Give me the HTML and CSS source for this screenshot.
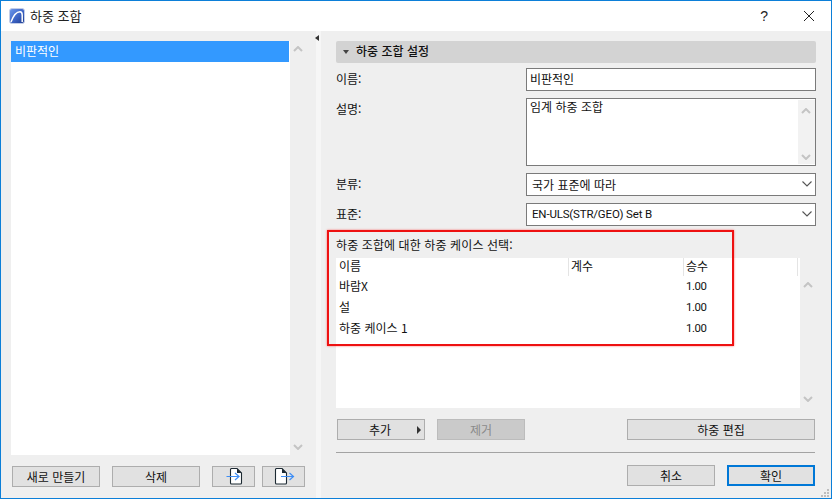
FILE: index.html
```html
<!DOCTYPE html>
<html lang="ko">
<head>
<meta charset="utf-8">
<title>하중 조합</title>
<link rel="stylesheet" href="styles.css">
</head>
<body>
<div class="window">
  <header class="titlebar">
    <svg class="app-icon" width="16" height="16" viewBox="0 0 16 16">
      <defs><linearGradient id="g" x1="0" y1="0" x2="1" y2="1"><stop offset="0" stop-color="#6f9bee"/><stop offset=".55" stop-color="#3c63c4"/><stop offset="1" stop-color="#1c3a8e"/></linearGradient></defs>
      <rect x="0.5" y="0.5" width="15" height="15" rx="2.500" fill="url(#g)" stroke="#c3cee8"/>
      <path d="M2 14C4 8.500 7.500 3.700 11 3.700c1.800 0 2.200 1.500 2.200 3.300V14" fill="none" stroke="#fff" stroke-width="1.500"/>
    </svg>
    <span class="title">하중 조합</span>
    <span class="help">?</span>
    <svg class="close" width="12" height="12" viewBox="0 0 12 12"><path d="M1 1l10 10M11 1L1 11" stroke="#222" stroke-width="1" fill="none"/></svg>
  </header>
  <div class="content">
    <aside class="left">
      <div class="list-row">
        <div class="list"><div class="list-item">비판적인</div></div>
        <div class="scroll">
          <svg class="chev" width="10" height="6" viewBox="0 0 10 6"><path d="M1 5l4-4 4 4" stroke="#c4c4c4" stroke-width="2" fill="none"/></svg>
          <svg class="chev" width="10" height="6" viewBox="0 0 10 6"><path d="M1 1l4 4 4-4" stroke="#c4c4c4" stroke-width="2" fill="none"/></svg>
        </div>
      </div>
      <div class="left-buttons">
        <button class="btn wide">새로 만들기</button>
        <button class="btn wide">삭제</button>
        <button class="btn icon-btn narrow-a">
          <svg width="24" height="17" viewBox="0 0 24 17"><path d="M8.500 1.500a1 1 0 0 1 1-1H15l4.500 4.500v10a1 1 0 0 1-1 1h-9a1 1 0 0 1-1-1z" fill="#fff" stroke="#1d2a33" stroke-width="1.100"/><path d="M15 .5V5h4.500z" fill="#1d2a33"/><path d="M4.500 8.500h12M13 5l4 3.500-4 3.500" fill="none" stroke="#3f8ef5" stroke-width="1.200"/></svg>
        </button>
        <button class="btn icon-btn narrow-b">
          <svg width="24" height="17" viewBox="0 0 24 17"><path d="M3.500 1.500a1 1 0 0 1 1-1H10l4.500 4.500v10a1 1 0 0 1-1 1h-9a1 1 0 0 1-1-1z" fill="#fff" stroke="#1d2a33" stroke-width="1.100"/><path d="M10 .5V5h4.500z" fill="#1d2a33"/><path d="M9 8.500h12M17.500 5l4 3.500-4 3.500" fill="none" stroke="#3f8ef5" stroke-width="1.200"/></svg>
        </button>
      </div>
    </aside>
    <div class="splitter"><i class="split-arrow"></i></div>
    <main class="right">
      <div class="section-head"><i class="tri-down"></i><span>하중 조합 설정</span></div>
      <div class="field first">
        <label class="lab">이름:</label>
        <div class="input">비판적인</div>
      </div>
      <div class="field">
        <label class="lab">설명:</label>
        <div class="input area">
          <span>임계 하중 조합</span>
          <div class="area-scroll">
            <svg width="10" height="6" viewBox="0 0 10 6"><path d="M1 5l4-4 4 4" stroke="#c4c4c4" stroke-width="2" fill="none"/></svg>
            <svg width="10" height="6" viewBox="0 0 10 6"><path d="M1 1l4 4 4-4" stroke="#c4c4c4" stroke-width="2" fill="none"/></svg>
          </div>
        </div>
      </div>
      <div class="field">
        <label class="lab">분류:</label>
        <div class="input select"><span>국가 표준에 따라</span><svg width="10" height="6" viewBox="0 0 10 6"><path d="M.5.5l4.500 4.500 4.500-4.500" stroke="#555" stroke-width="1.100" fill="none"/></svg></div>
      </div>
      <div class="field">
        <label class="lab">표준:</label>
        <div class="input select"><span class="latin">EN-ULS(STR/GEO) Set B</span><svg width="10" height="6" viewBox="0 0 10 6"><path d="M.5.5l4.500 4.500 4.500-4.500" stroke="#555" stroke-width="1.100" fill="none"/></svg></div>
      </div>
      <div class="table-title">하중 조합에 대한 하중 케이스 선택:</div>
      <div class="table-wrap">
        <div class="table">
          <div class="thead">
            <div class="th c1">이름</div><div class="th c2">계수</div><div class="th c3">승수</div>
          </div>
          <div class="tr"><div class="c1">바람X</div><div class="c2"></div><div class="c3 num">1.00</div></div>
          <div class="tr"><div class="c1">설</div><div class="c2"></div><div class="c3 num">1.00</div></div>
          <div class="tr"><div class="c1">하중 케이스 1</div><div class="c2"></div><div class="c3 num">1.00</div></div>
        </div>
        <div class="table-scroll">
          <svg width="10" height="6" viewBox="0 0 10 6"><path d="M1 5l4-4 4 4" stroke="#c4c4c4" stroke-width="2" fill="none"/></svg>
          <svg width="10" height="6" viewBox="0 0 10 6"><path d="M1 1l4 4 4-4" stroke="#c4c4c4" stroke-width="2" fill="none"/></svg>
        </div>
      </div>
      <div class="actions">
        <button class="btn wide add">추가<i class="tri-right"></i></button>
        <button class="btn wide disabled">제거</button>
        <button class="btn edit">하중 편집</button>
      </div>
      <hr class="sep">
      <div class="footer">
        <button class="btn wide">취소</button>
        <button class="btn wide primary">확인</button>
      </div>
      <div class="redbox"></div>
    </main>
  </div>
  <svg class="grip" width="8" height="8" viewBox="0 0 8 8"><path d="M6 0h2v2H6zM3 3h2v2H3zM6 3h2v2H6zM0 6h2v2H0zM3 6h2v2H3zM6 6h2v2H6z" fill="#bdbdbd"/></svg>
</div>
</body>
</html>
```
FILE: styles.css
```css
* { box-sizing: border-box; }
html, body { margin: 0; padding: 0; }
body {
  width: 832px;
  height: 499px;
  overflow: hidden;
  font-family: "Noto Sans CJK KR", "Noto Sans", sans-serif;
  font-size: 12px;
  color: #111;
}
.latin { font-family: Roboto, "Noto Sans", sans-serif; font-size: 11.5px; letter-spacing: -.18px; }
.num { font-family: Roboto, "Noto Sans", sans-serif; font-size: 11.4px; letter-spacing: -.4px; }
.window {
  position: relative;
  width: 832px;
  height: 499px;
  border: 1px solid #0c7fd8;
  background: #efefef;
  display: flex;
  flex-direction: column;
}
.titlebar {
  height: 30px;
  flex: none;
  background: #fff;
  display: flex;
  align-items: center;
  padding-left: 8px;
}
.app-icon { flex: none; }
.title { margin: 0 0 1px 5px; font-size: 13px; color: #222; }
.help { margin-left: auto; font-family: "Liberation Sans", sans-serif; font-size: 14px; color: #222; }
.close { margin-left: 35px; margin-right: 16px; }
.content { flex: 1; display: flex; min-height: 0; }
.left {
  width: 315px;
  flex: none;
  padding: 10px 0 0 10px;
  display: flex;
  flex-direction: column;
}
.list-row { height: 414px; display: flex; flex: none; }
.list { width: 279px; background: #fff; }
.list-item {
  height: 21px;
  margin-right: 1px;
  background: #3399ff;
  color: #fff;
  line-height: 19px;
  padding-left: 4px;
}
.scroll {
  width: 15px;
  padding: 5px 0 5px 3px;
  display: flex;
  flex-direction: column;
  justify-content: space-between;
}
.left-buttons { display: flex; margin-top: 11px; padding-left: 1px; }
.btn {
  height: 21px;
  padding: 0;
  border: 1px solid #adadad;
  background: #e1e1e1;
  font: inherit;
  color: #111;
  line-height: 17px;
  text-align: center;
}
.wide { width: 88px; flex: none; }
.left-buttons .wide + .wide { margin-left: 12px; }
.icon-btn { display: flex; align-items: center; justify-content: center; }
.narrow-a { width: 43px; margin-left: 12px; }
.narrow-b { width: 43px; margin-left: 7px; }
.splitter { width: 5px; flex: none; background: #f6f6f6; position: relative; }
.split-arrow {
  position: absolute;
  left: -1px;
  top: 4px;
  border-style: solid;
  border-width: 3.5px 4px 3.500px 0;
  border-color: transparent #333 transparent transparent;
}
.right {
  position: relative;
  flex: 1;
  padding: 10px 15px 0 15px;
  display: flex;
  flex-direction: column;
}
.section-head {
  height: 22px;
  flex: none;
  background: #d3d3d3;
  border-radius: 2px;
  display: flex;
  align-items: center;
  padding-left: 7px;
  font-weight: 500;
}
.section-head span { margin: 0 0 3px 7px; }
.tri-down {
  width: 0;
  height: 0;
  margin-bottom: 1px;
  border-style: solid;
  border-width: 4px 3.500px 0;
  border-color: #444 transparent transparent;
}
.field { display: flex; margin-top: 7px; flex: none; }
.field.first { margin-top: 5px; }
.lab { width: 190px; flex: none; line-height: 21px; }
.input {
  width: 290px;
  height: 23px;
  background: #fff;
  border: 1px solid #7a7a7a;
  padding-left: 3px;
  line-height: 19px;
}
.area {
  height: 68px;
  display: flex;
  justify-content: space-between;
  line-height: 16px;
  padding-right: 0;
}
.area-scroll {
  width: 17px;
  margin-top: 1px;
  margin-bottom: 1px;
  background: #f2f2f2;
  padding: 8px 0 4px 3px;
  display: flex;
  flex-direction: column;
  justify-content: space-between;
}
.select {
  display: flex;
  align-items: center;
  justify-content: space-between;
  padding-left: 5px;
  padding-right: 3px;
  padding-bottom: 1px;
}
.table-title { margin-top: 10px; height: 22px; line-height: 18px; flex: none; letter-spacing: .1px; }
.table-wrap { display: flex; height: 150px; flex: none; }
.table { width: 464px; background: #fff; }
.thead { display: flex; height: 18px; width: 462px; background: #fff; }
.tr { display: flex; height: 21px; line-height: 20px; }
.c1 { width: 233px; padding-left: 3px; flex: none; }
.c2 { width: 115px; padding-left: 2px; flex: none; }
.c3 { width: 114px; padding-left: 2px; flex: none; }
.th { border-right: 1px solid #e4e4e4; line-height: 15px; }
.table-scroll {
  width: 15px;
  padding: 24px 0 6px 3px;
  display: flex;
  flex-direction: column;
  justify-content: space-between;
}
.actions { display: flex; margin-top: 11px; padding: 0 1px; flex: none; }
.actions .wide + .wide { margin-left: 12px; }
.add { position: relative; padding-right: 2px; line-height: 14px; }
.tri-right {
  position: absolute;
  right: 3px;
  top: 6px;
  border-style: solid;
  border-width: 4px 0 4px 4px;
  border-color: transparent transparent transparent #333;
}
.disabled { background: #cacaca; border-color: #bcbcbc; color: #8a8a8a; }
.edit { width: 188px; margin-left: auto; }
.sep {
  width: 479px;
  height: 1px;
  border: 0;
  background: #a3a3a3;
  margin: 12px 0 0;
  flex: none;
}
.footer { display: flex; justify-content: flex-end; margin-top: 12px; padding-right: 1px; flex: none; }
.footer .wide + .wide { margin-left: 12px; }
.primary { border: 2px solid #0078d7; line-height: 15px; }
.redbox {
  position: absolute;
  left: 6px;
  top: 199px;
  width: 407px;
  height: 116px;
  border: 2px solid #ee1111;
  box-shadow: 0 0 2px rgba(255, 60, 60, .7);
  pointer-events: none;
}
.grip { position: absolute; right: 2px; bottom: 1px; }
```
